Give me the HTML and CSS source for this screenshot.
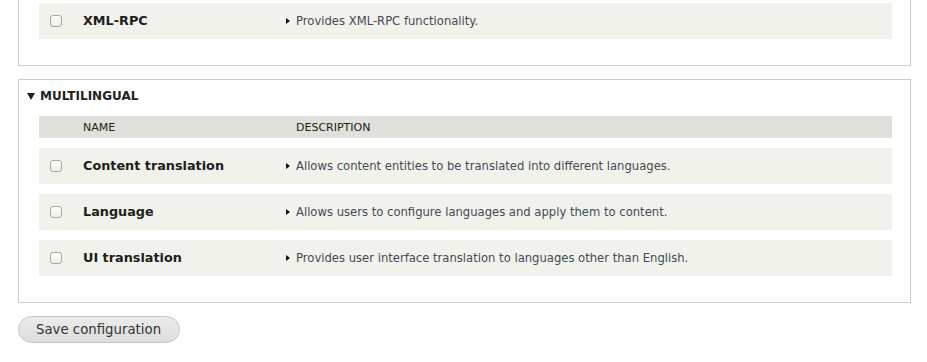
FILE: index.html
```html
<!DOCTYPE html>
<html>
<head>
<meta charset="utf-8">
<link rel="stylesheet" href="styles.css">
</head>
<body>
<div class="page">
  <div class="fieldset cut">
    <div class="mods">
      <div class="row">
        <div class="c-check"><span class="cb"></span></div>
        <div class="c-name">XML-RPC</div>
        <div class="c-desc"><span class="tri"></span>Provides XML-RPC functionality.</div>
      </div>
    </div>
  </div>

  <div class="fieldset">
    <div class="legend"><span class="down"></span>MULTILINGUAL</div>
    <div class="mods">
      <div class="row head">
        <div class="c-check"></div>
        <div class="c-name">NAME</div>
        <div class="c-desc">DESCRIPTION</div>
      </div>
      <div class="row">
        <div class="c-check"><span class="cb"></span></div>
        <div class="c-name">Content translation</div>
        <div class="c-desc"><span class="tri"></span>Allows content entities to be translated into different languages.</div>
      </div>
      <div class="row">
        <div class="c-check"><span class="cb"></span></div>
        <div class="c-name">Language</div>
        <div class="c-desc"><span class="tri"></span>Allows users to configure languages and apply them to content.</div>
      </div>
      <div class="row">
        <div class="c-check"><span class="cb"></span></div>
        <div class="c-name">UI translation</div>
        <div class="c-desc"><span class="tri"></span>Provides user interface translation to languages other than English.</div>
      </div>
    </div>
  </div>

  <button class="btn" type="button">Save configuration</button>
</div>
</body>
</html>
```

FILE: styles.css
```css
html, body {
  margin: 0;
  padding: 0;
  background: #fff;
}
body {
  font-family: "DejaVu Sans", "Liberation Sans", sans-serif;
  color: #222;
}
.page {
  padding: 0 16px 0 18px;
}
.fieldset {
  border: 1px solid #cccccc;
  padding: 8px 18px 26px 20px;
  margin-bottom: 13px;
}
.fieldset.cut {
  border-top: 0;
  padding-top: 3px;
}
.legend {
  height: 16px;
  line-height: 16px;
  margin-bottom: 12px;
  margin-left: -13px;
  font-size: 12px;
  font-weight: bold;
  color: #222;
  display: flex;
  align-items: center;
}
.down {
  width: 0;
  height: 0;
  border-left: 4px solid transparent;
  border-right: 4px solid transparent;
  border-top: 7px solid #222;
  margin-right: 5px;
  margin-left: 1px;
}
.mods {
  display: flex;
  flex-direction: column;
  gap: 10px;
}
.row {
  display: flex;
  align-items: center;
  height: 36px;
  background: #f2f2ec;
}
.row.head {
  height: 22px;
  background: #e1e1db;
  font-size: 11px;
  color: #222;
}
.c-check {
  width: 44px;
  padding-left: 11px;
  box-sizing: border-box;
  display: flex;
  align-items: center;
}
.c-name {
  width: 203px;
  font-size: 12.8px;
  font-weight: bold;
  color: #1d1d1d;
  margin-top: -2px;
}
.head .c-name {
  font-weight: normal;
  font-size: 11px;
  margin-top: 0;
  color: #222;
}
.c-desc {
  flex: 1;
  font-size: 11.6px;
  color: #454a55;
  display: flex;
  align-items: center;
}
.head .c-desc {
  padding-left: 10px;
  font-size: 11px;
  color: #222;
}
.cb {
  width: 10px;
  height: 10px;
  border: 1px solid #a8a8a8;
  border-radius: 3px;
  background: linear-gradient(#ffffff, #ececec);
  display: block;
}
.tri {
  width: 0;
  height: 0;
  border-top: 3px solid transparent;
  border-bottom: 3px solid transparent;
  border-left: 4px solid #111;
  margin-right: 6px;
}
.btn {
  display: block;
  width: 162px;
  height: 27px;
  border: 1px solid #c6c6c6;
  border-radius: 14px;
  background: linear-gradient(#ebebeb, #dedede);
  font-family: "DejaVu Sans", "Liberation Sans", sans-serif;
  font-size: 13.3px;
  color: #333;
  text-align: left;
  padding: 0 0 0 17px;
  margin: 0;
}
```
